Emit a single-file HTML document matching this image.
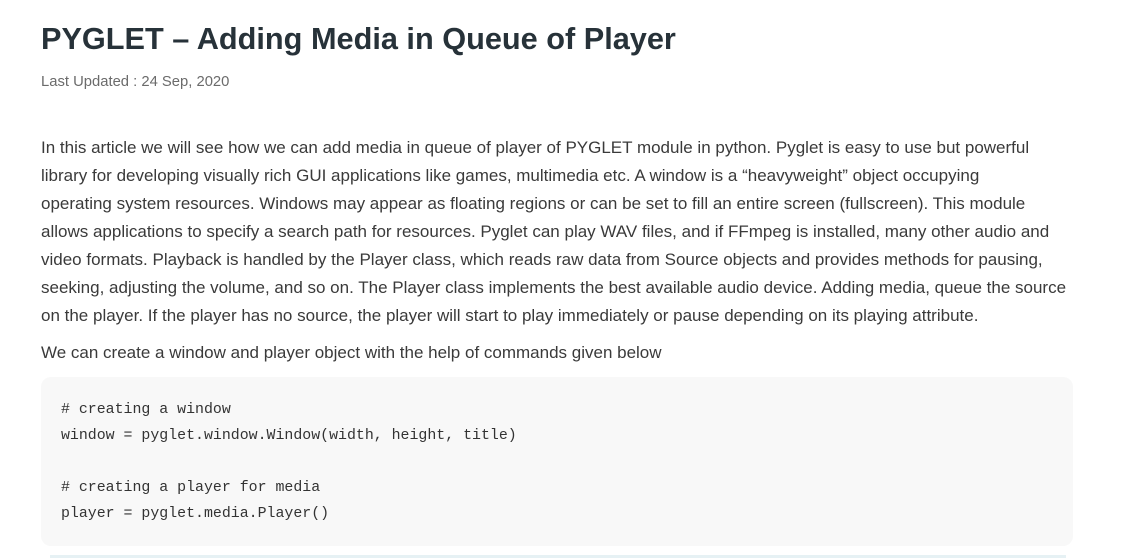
<!DOCTYPE html>
<html><head><meta charset="utf-8"><style>
body{margin:0;background:#fff;width:1126px;height:558px;overflow:hidden;font-family:"Liberation Sans",sans-serif;}
h1{position:absolute;left:41px;top:21px;margin:0;font-size:30.7px;font-weight:bold;color:#273239;white-space:nowrap;}
.date{position:absolute;left:41px;top:74px;font-size:14.8px;color:#6b6b6b;}
.p{position:absolute;left:41px;top:134px;font-size:17px;line-height:28px;color:#3a3a3a;white-space:nowrap;}
.p2{position:absolute;left:41px;top:343px;font-size:17px;color:#3a3a3a;white-space:nowrap;}
.code{position:absolute;left:41px;top:377px;width:1032px;height:169px;background:#f8f8f8;border-radius:10px;}
.code pre{margin:0;position:absolute;left:20px;top:20px;font-family:"Liberation Mono",monospace;font-size:14.9px;line-height:26px;color:#333;}
.bl{position:absolute;left:50px;top:555px;width:1016px;height:3px;background:#e6f1f4;}
</style></head><body>
<h1>PYGLET – Adding Media in Queue of Player</h1>
<div class="date">Last Updated : 24 Sep, 2020</div>
<div class="p">In this article we will see how we can add media in queue of player of PYGLET module in python. Pyglet is easy to use but powerful<br>library for developing visually rich GUI applications like games, multimedia etc. A window is a “heavyweight” object occupying<br>operating system resources. Windows may appear as floating regions or can be set to fill an entire screen (fullscreen). This module<br>allows applications to specify a search path for resources. Pyglet can play WAV files, and if FFmpeg is installed, many other audio and<br>video formats. Playback is handled by the Player class, which reads raw data from Source objects and provides methods for pausing,<br>seeking, adjusting the volume, and so on. The Player class implements the best available audio device. Adding media, queue the source<br>on the player. If the player has no source, the player will start to play immediately or pause depending on its playing attribute.</div>
<div class="p2">We can create a window and player object with the help of commands given below</div>
<div class="code"><pre># creating a window
window = pyglet.window.Window(width, height, title)

# creating a player for media
player = pyglet.media.Player()</pre></div>
<div class="bl"></div>
</body></html>
